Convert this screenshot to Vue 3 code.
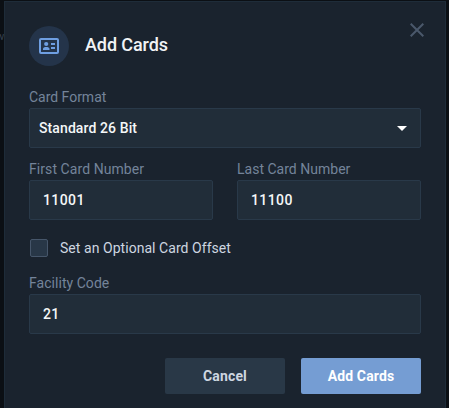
<script setup>
import { ref } from 'vue'

const first = ref('11001')
const last = ref('11100')
const facility = ref('21')
</script>

<template>
  <div class="page">
    <span class="behind">w</span>
    <section class="modal">
      <header class="header">
        <span class="badge">
          <svg width="20" height="16" viewBox="0 0 20 16">
            <rect x="1" y="1" width="18" height="14" rx="1" fill="none" stroke="#6f9fe2" stroke-width="2" />
            <circle cx="7.2" cy="6" r="2.1" fill="#6f9fe2" />
            <path d="M4 12v-1c0-1.500 1.500-2 3.200-2s3.300.5 3.300 2v1z" fill="#6f9fe2" />
            <path d="M12 6h4M12 10h4" stroke="#6f9fe2" stroke-width="2" />
          </svg>
        </span>
        <h1 class="title">Add Cards</h1>
        <button class="close" aria-label="Close">
          <svg width="14" height="14" viewBox="0 0 14 14">
            <path d="M.7.7l12.600 12.600M13.300.7L.7 13.300" stroke="#4a586b" stroke-width="2" />
          </svg>
        </button>
      </header>

      <div class="field format">
        <label class="label l-format">Card Format</label>
        <div class="box select">
          <span class="select-text">Standard 26 Bit</span>
          <svg width="10" height="5" viewBox="0 0 10 5"><path d="M0 0h10L5 5z" fill="#fff" /></svg>
        </div>
      </div>

      <div class="pair">
        <div class="field">
          <label class="label l-first">First Card Number</label>
          <input v-model="first" class="box" />
        </div>
        <div class="field">
          <label class="label l-last">Last Card Number</label>
          <input v-model="last" class="box" />
        </div>
      </div>

      <div class="check-row">
        <span class="check"></span>
        <span class="check-text">Set an Optional Card Offset</span>
      </div>

      <div class="field facility">
        <label class="label l-facility">Facility Code</label>
        <input v-model="facility" class="box" />
      </div>

      <footer class="actions">
        <button class="btn cancel">Cancel</button>
        <button class="btn primary">Add Cards</button>
      </footer>
    </section>
  </div>
</template>

<style>
body { margin: 0; background: #0b0f14; }
</style>

<style scoped>
* { box-sizing: border-box; }
.page {
  position: relative;
  height: 408px;
  overflow: hidden;
  padding: 1px 3px 0 4px;
  background: #0b0f14;
  font-family: Roboto, "Liberation Sans", sans-serif;
}
.behind { position: absolute; left: -4px; top: 30px; font-size: 11px; line-height: 14px; color: #344150; }
.modal {
  position: relative;
  width: 442px;
  height: 420px;
  padding: 24px 24px 0;
  border: 1px solid #1e2c39;
  background: #1a232e;
}
.header { display: flex; align-items: center; height: 40px; }
.badge {
  display: flex;
  align-items: center;
  justify-content: center;
  width: 40px;
  height: 40px;
  border-radius: 50%;
  background: #24344a;
}
.title { margin: -2px 0 0 16px; font-size: 18px; line-height: 24px; font-weight: 500; letter-spacing: -0.1px; color: #f1f3f5; }
.close { display: flex; align-self: flex-start; margin: -3px -3px 0 auto; padding: 0; border: 0; background: none; }
.field { flex: 1; min-width: 0; }
.format { margin-top: 22px; }
.label { display: block; width: max-content; height: 20px; font-size: 14px; line-height: 19px; color: #74849a; white-space: nowrap; }
.l-format { letter-spacing: -0.02px; }
.l-first { letter-spacing: 0.07px; }
.l-last { letter-spacing: 0.01px; }
.l-facility { letter-spacing: 0.04px; }
.box {
  display: block;
  width: 100%;
  height: 40px;
  padding: 0 13px;
  border: 1px solid #293949;
  border-radius: 2px;
  outline: 0;
  background: #212d39;
  color: #f5f7f8;
  font: 500 14px Roboto, "Liberation Sans", sans-serif;
  letter-spacing: 0.4px;
}
.select { display: flex; align-items: center; justify-content: space-between; padding-left: 9px; }
.select-text { letter-spacing: 0.1px; }
.pair { display: flex; gap: 24px; margin-top: 12px; }
.check-row { display: flex; align-items: center; height: 18px; margin: 19px 0 0 1px; }
.check { width: 18px; height: 18px; border: 1px solid #46566a; border-radius: 2px; background: #283747; }
.check-text { margin: -1px 0 0 12px; font-size: 14px; line-height: 18px; letter-spacing: 0.05px; color: #ced6e0; white-space: nowrap; }
.facility { margin-top: 17px; }
.actions { display: flex; justify-content: flex-end; gap: 16px; margin-top: 24px; }
.btn {
  width: 120px;
  height: 36px;
  padding: 0 0 1px;
  border: 0;
  border-radius: 2px;
  font: 700 14px Roboto, "Liberation Sans", sans-serif;
  letter-spacing: 0.15px;
}
.cancel { background: #293847; color: #ced6e0; }
.primary { background: #759dd3; color: #fff; }
</style>
